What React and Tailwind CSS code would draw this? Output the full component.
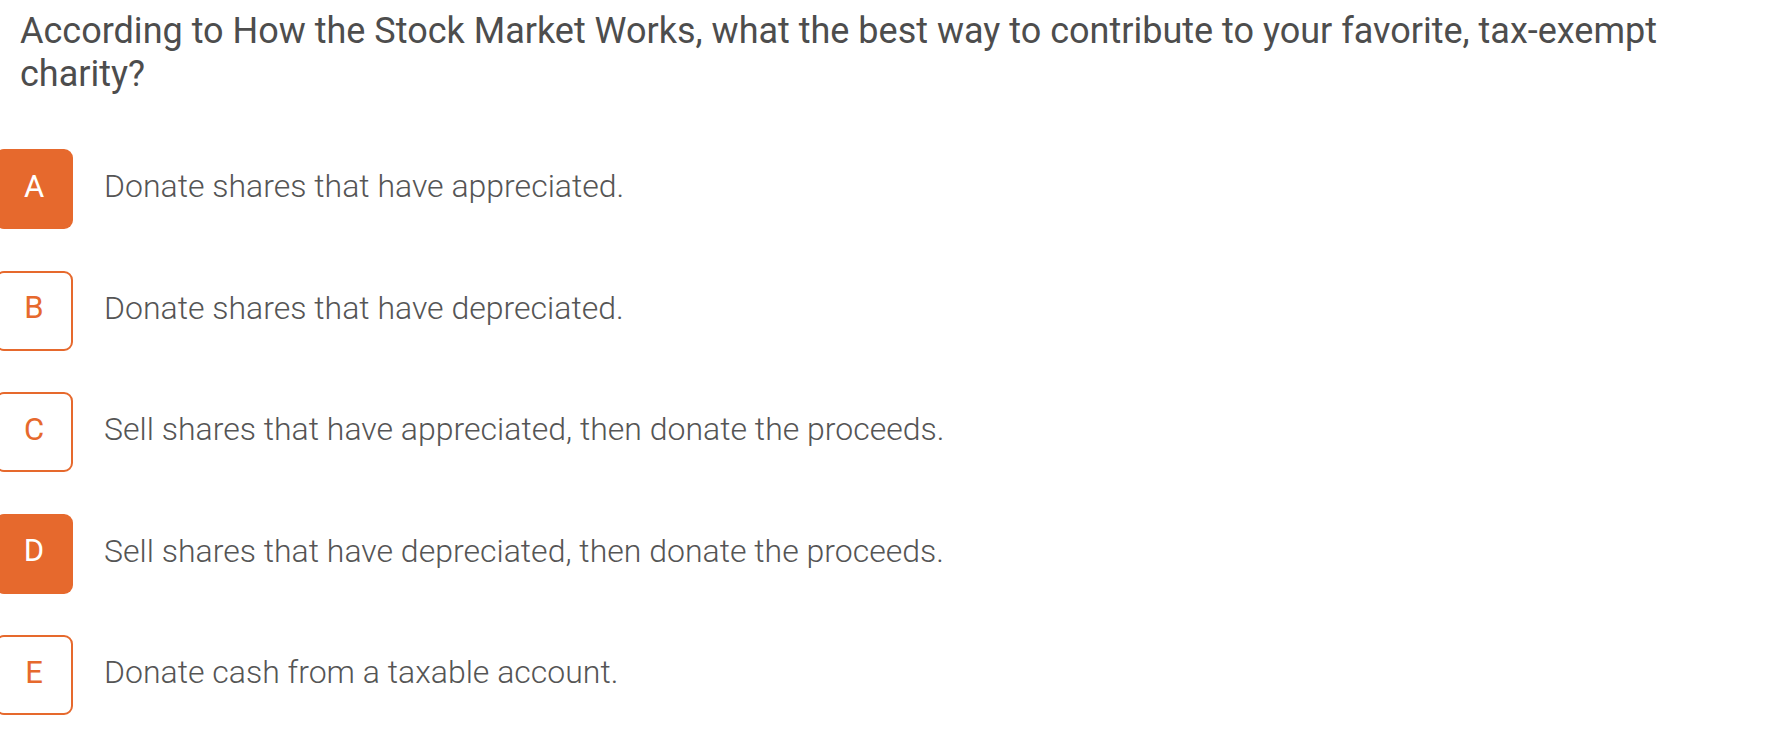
import React from 'react';

const options = [
    { key: 'A', text: 'Donate shares that have appreciated.', selected: true },
    { key: 'B', text: 'Donate shares that have depreciated.', selected: false },
    { key: 'C', text: 'Sell shares that have appreciated, then donate the proceeds.', selected: false },
    { key: 'D', text: 'Sell shares that have depreciated, then donate the proceeds.', selected: true },
    { key: 'E', text: 'Donate cash from a taxable account.', selected: false },
];

const App = () => {
    return (
        <div className="min-h-screen bg-white pl-[20px] pt-[10px] font-['Roboto',sans-serif]">
            {/* Question */}
            <h1 className="text-[36px] leading-[43px] font-normal text-[#4d4d4d] max-w-[1700px]">
                According to How the Stock Market Works, what the best way to contribute to your favorite, tax-exempt charity?
            </h1>

            {/* Answers */}
            <div className="mt-[53px] flex flex-col gap-[41.5px]">
                {options.map((opt) => (
                    <div key={opt.key} className="flex items-center">
                        <div
                            className={
                                opt.selected
                                    ? 'ml-[-25px] w-[78px] h-[80px] rounded-[9px] bg-[#e6692d] text-white flex items-center justify-center pb-[4px] text-[31px] font-normal'
                                    : 'ml-[-25px] w-[78px] h-[80px] rounded-[9px] border-2 border-[#e6692d] text-[#e6692d] flex items-center justify-center pb-[4px] text-[31px] font-normal'
                            }
                        >
                            {opt.key}
                        </div>
                        <span className="ml-[31px] mb-[6px] text-[32px] font-light text-[#555555]">{opt.text}</span>
                    </div>
                ))}
            </div>
        </div>
    );
};

export default App;
